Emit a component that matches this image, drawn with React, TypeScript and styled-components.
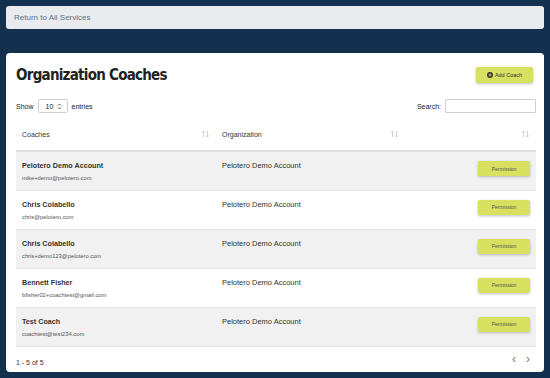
import styled, { createGlobalStyle } from "styled-components"

const coaches = [
  { name: "Pelotero Demo Account", email: "mike+demo@pelotero.com", org: "Pelotero Demo Account" },
  { name: "Chris Colabello", email: "chris@pelotero.com", org: "Pelotero Demo Account" },
  { name: "Chris Colabello", email: "chris+demo123@pelotero.com", org: "Pelotero Demo Account" },
  { name: "Bennett Fisher", email: "bfisher02+coachtest@gmail.com", org: "Pelotero Demo Account" },
  { name: "Test Coach", email: "coachtest@test234.com", org: "Pelotero Demo Account" },
]

const GlobalStyle = createGlobalStyle`
  html, body {
    margin: 0;
    padding: 0;
    background: #14304f;
    font-family: "Liberation Sans", Arial, sans-serif;
  }
`

const SortIcon = () => (
  <svg width="9" height="8" viewBox="0 0 9 8">
    <path d="M2.5 7V1M1 2.5L2.5 1L4 2.5" stroke="#c4c4c4" strokeWidth="0.8" fill="none" />
    <path d="M6.5 1V7M5 5.5L6.5 7L8 5.5" stroke="#c4c4c4" strokeWidth="0.8" fill="none" />
  </svg>
)

const App = () => {
  return (
    <>
      <GlobalStyle />
      <Page>
        <TopBar>
          <BackLink>Return to All Services</BackLink>
        </TopBar>
        <Card>
          <CardHeader>
            <Title>Organization Coaches</Title>
            <AddButton>
              <svg width="6" height="6" viewBox="0 0 6 6">
                <circle cx="3" cy="3" r="3" fill="#333" />
                <path d="M3 1.5V4.5M1.5 3H4.5" stroke="#d7df5e" strokeWidth="0.9" />
              </svg>
              Add Coach
            </AddButton>
          </CardHeader>
          <Controls>
            <Label>
              Show
              <SelectBox>
                10
                <svg width="5" height="7" viewBox="0 0 5 7">
                  <path d="M1 2.5L2.5 1L4 2.5M1 4.5L2.5 6L4 4.5" stroke="#444" strokeWidth="0.9" fill="none" />
                </svg>
              </SelectBox>
              entries
            </Label>
            <Label>
              Search:
              <SearchInput />
            </Label>
          </Controls>
          <Table>
            <thead>
              <tr>
                <Th>
                  <HeadCell>
                    Coaches
                    <SortIcon />
                  </HeadCell>
                </Th>
                <Th>
                  <HeadCell>
                    Organization
                    <SortIcon />
                  </HeadCell>
                </Th>
                <Th>
                  <HeadCell>
                    <span />
                    <SortIcon />
                  </HeadCell>
                </Th>
              </tr>
            </thead>
            <tbody>
              {coaches.map((c, i) => (
                <Row key={i} $striped={i % 2 === 0}>
                  <Td>
                    <Name>{c.name}</Name>
                    <Email>{c.email}</Email>
                  </Td>
                  <Td>
                    <Org>{c.org}</Org>
                  </Td>
                  <ActionTd>
                    <PermissionButton>Permission</PermissionButton>
                  </ActionTd>
                </Row>
              ))}
            </tbody>
          </Table>
          <Footer>
            <Info>1 - 5 of 5</Info>
            <Pager>
              <PageArrow>‹</PageArrow>
              <PageArrow>›</PageArrow>
            </Pager>
          </Footer>
        </Card>
      </Page>
    </>
  )
}

export default App

const Page = styled.div`
  width: 550px;
  height: 378px;
  padding: 6px 6px 0;
  box-sizing: border-box;
  display: flex;
  flex-direction: column;
  gap: 24px;
`

const TopBar = styled.div`
  height: 23px;
  background: #e9ebee;
  border-radius: 3px;
  display: flex;
  align-items: center;
  padding: 0 8px;
`

const BackLink = styled.span`
  font-size: 8px;
  color: #5a7193;
`

const Card = styled.div`
  background: #fff;
  border-radius: 4px;
  padding: 11px 8px 0 10px;
  height: 319px;
  box-sizing: border-box;
`

const CardHeader = styled.div`
  display: flex;
  justify-content: space-between;
  align-items: flex-start;
  height: 34px;
`

const Title = styled.h1`
  margin: 2px 0 0;
  font-family: "DejaVu Sans Condensed", "DejaVu Sans", sans-serif;
  font-size: 15px;
  font-weight: bold;
  color: #222;
  letter-spacing: -0.75px;
`

const AddButton = styled.button`
  margin: 3px 3px 0 0;
  width: 57px;
  height: 16px;
  border: none;
  border-radius: 2px;
  background: #d8e05f;
  box-shadow: 0 1px 3px rgba(0, 0, 0, 0.25);
  font-family: "Liberation Sans", Arial, sans-serif;
  font-size: 5.5px;
  color: #333;
  display: flex;
  align-items: center;
  justify-content: center;
  gap: 2px;
  padding: 0;
`

const Controls = styled.div`
  display: flex;
  justify-content: space-between;
  align-items: center;
  height: 14px;
  margin-top: 1px;
`

const Label = styled.label`
  display: flex;
  align-items: center;
  gap: 4px;
  font-size: 7px;
  color: #222;
`

const SelectBox = styled.div`
  width: 30px;
  height: 14px;
  box-sizing: border-box;
  border: 1px solid #d0d0d0;
  border-radius: 2px;
  display: flex;
  align-items: center;
  justify-content: space-between;
  padding: 0 5px 0 7px;
  font-size: 7px;
`

const SearchInput = styled.div`
  width: 91px;
  height: 14px;
  box-sizing: border-box;
  border: 1px solid #cfcfcf;
  border-radius: 1px;
`

const Table = styled.table`
  width: 100%;
  border-collapse: collapse;
  margin-top: 5px;
`

const Th = styled.th`
  height: 32px;
  padding: 0 6px;
  border-bottom: 2px solid #dedede;
  font-size: 7px;
  font-weight: normal;
  color: #333;
  text-align: left;
  &:nth-child(1) {
    width: 188px;
  }
  &:nth-child(2) {
    width: 177px;
  }
`

const HeadCell = styled.div`
  display: flex;
  justify-content: space-between;
  align-items: center;
`

const Row = styled.tr<{ $striped: boolean }>`
  height: 39px;
  background: ${({ $striped }) => ($striped ? "#f1f1f1" : "#fff")};
  border-bottom: 1px solid #e4e4e4;
`

const Td = styled.td`
  padding: 9px 6px 0;
  vertical-align: top;
`

const ActionTd = styled.td`
  padding: 9px 6px 0 0;
  vertical-align: top;
`

const Name = styled.div`
  font-size: 7.2px;
  font-weight: bold;
  color: #333;
`

const Email = styled.div`
  margin-top: 5px;
  font-size: 5.8px;
  color: #555;
`

const Org = styled.div`
  font-size: 7.5px;
  color: #333;
`

const PermissionButton = styled.button`
  display: block;
  margin-left: auto;
  width: 52px;
  height: 15px;
  border: none;
  border-radius: 2px;
  background: #d8e05f;
  box-shadow: 0 1px 3px rgba(0, 0, 0, 0.25);
  font-family: "Liberation Sans", Arial, sans-serif;
  font-size: 5px;
  color: #555;
  padding: 0;
`

const Footer = styled.div`
  display: flex;
  justify-content: space-between;
  align-items: center;
  padding: 12px 0 0;
`

const Info = styled.span`
  font-size: 7px;
  color: #333;
`

const Pager = styled.div`
  display: flex;
  gap: 10px;
  padding-right: 6px;
  margin-top: -6px;
`

const PageArrow = styled.span`
  font-size: 12px;
  color: #777;
  line-height: 10px;
`
